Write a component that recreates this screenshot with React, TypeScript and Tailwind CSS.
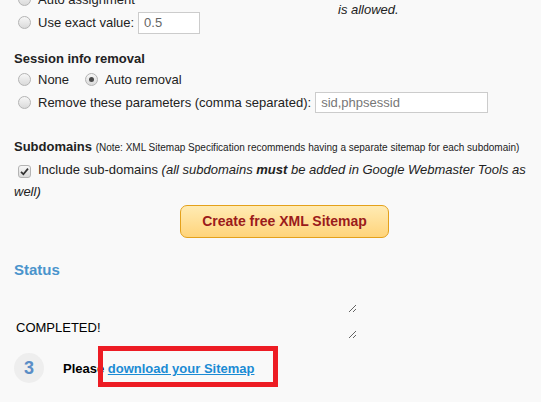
import React from "react";

function Radio({ checked = false }: { checked?: boolean }) {
  return (
    <span className="inline-flex h-[13px] w-[13px] shrink-0 items-center justify-center rounded-full border border-[#b4b4b4] bg-linear-to-b from-[#f7f7f7] to-[#dadada]">
      {checked && <span className="h-[5px] w-[5px] rounded-full bg-[#4a4a4a]" />}
    </span>
  );
}

function Checkbox() {
  return (
    <span className="ml-[4px] mr-[7px] inline-flex h-[13px] w-[13px] items-center justify-center rounded-[3px] border border-[#b4b4b4] bg-linear-to-b from-[#f7f7f7] to-[#dadada] align-[-2px]">
      <svg width="9" height="9" viewBox="0 0 9 9">
        <path d="M1 4.8 L3.4 7.2 L8 1.6" fill="none" stroke="#333" strokeWidth="1.7" />
      </svg>
    </span>
  );
}

export default function App() {
  return (
    <div className="h-[402px] w-[541px] overflow-hidden bg-[#f9f9f9] font-['Liberation_Sans',Arial,sans-serif] text-[13px] text-[#222]">
      <div className="ml-[14px] w-[520px]">
        <div className="-mt-[12px] flex">
          <div className="w-[324px]">
            <div className="flex h-[23px] items-center">
              <span className="ml-[4px] mr-[7px] flex"><Radio /></span>
              Auto assignment
            </div>
            <div className="flex h-[23px] items-center">
              <span className="ml-[4px] mr-[7px] flex"><Radio /></span>
              Use exact value:
              <input
                defaultValue="0.5"
                className="ml-[4px] h-[22px] w-[62px] border border-[#cccccc] bg-white px-[5px] text-[#666] outline-none"
              />
            </div>
          </div>
          <div className="pt-[12px] italic leading-[20px]">is allowed.</div>
        </div>

        <div className="mt-[16px] h-[18px] font-bold leading-[18px]">Session info removal</div>
        <div className="flex h-[23px] items-center">
          <span className="ml-[4px] mr-[7px] flex"><Radio /></span>
          None
          <span className="ml-[16px] mr-[7px] flex"><Radio checked /></span>
          Auto removal
        </div>
        <div className="flex h-[23px] items-center">
          <span className="ml-[4px] mr-[7px] flex"><Radio /></span>
          Remove these parameters (comma separated):
          <input
            defaultValue="sid,phpsessid"
            className="ml-[4px] h-[21px] w-[173px] border border-[#cccccc] bg-white px-[5px] text-[#777] outline-none"
          />
        </div>

        <div className="mt-[24px] h-[18px] whitespace-nowrap leading-[18px]">
          <span className="font-bold">Subdomains</span>{" "}
          <span className="text-[10px]">
            (Note: XML Sitemap Specification recommends having a separate sitemap for each subdomain)
          </span>
        </div>
        <p className="mt-[3px] leading-[22px]">
          <Checkbox />
          Include sub-domains{" "}
          <i>
            (all subdomains <b>must</b> be added in Google Webmaster Tools as well)
          </i>
        </p>

        <button className="ml-[166px] mt-[2px] block h-[33px] w-[209px] rounded-[7px] border border-[#e4a11b] bg-linear-to-b from-[#ffebb3] to-[#ffd47a] text-[14px] font-bold text-[#9b1b1b]">
          Create free XML Sitemap
        </button>

        <div className="mt-[23px] h-[18px] text-[15px] font-bold leading-[18px] text-[#4a94cc]">Status</div>

        <textarea className="mt-[14px] block h-[20px] w-[343px] border-0 bg-transparent p-[2px] outline-none" />
        <textarea
          defaultValue="COMPLETED!"
          className="mt-[2px] block h-[24px] w-[343px] overflow-hidden border-0 bg-transparent pb-0 pl-[2px] pt-[5px] leading-[16px] text-black outline-none"
        />

        <div className="relative mt-[14px] flex h-[30px] items-center">
          <span className="flex h-[30px] w-[30px] items-center justify-center rounded-full bg-[#eeeeee] text-[18px] font-bold text-[#5a8dc6]">
            3
          </span>
          <span className="ml-[19px] mt-[1px] font-bold text-black">
            Please{" "}
            <a href="#" className="text-[#1b8bd4] underline">
              download your Sitemap
            </a>
          </span>
          <div className="absolute left-[84px] top-[-7px] h-[41px] w-[180px] border-[5px] border-[#ed1c24]" />
        </div>
      </div>
    </div>
  );
}
